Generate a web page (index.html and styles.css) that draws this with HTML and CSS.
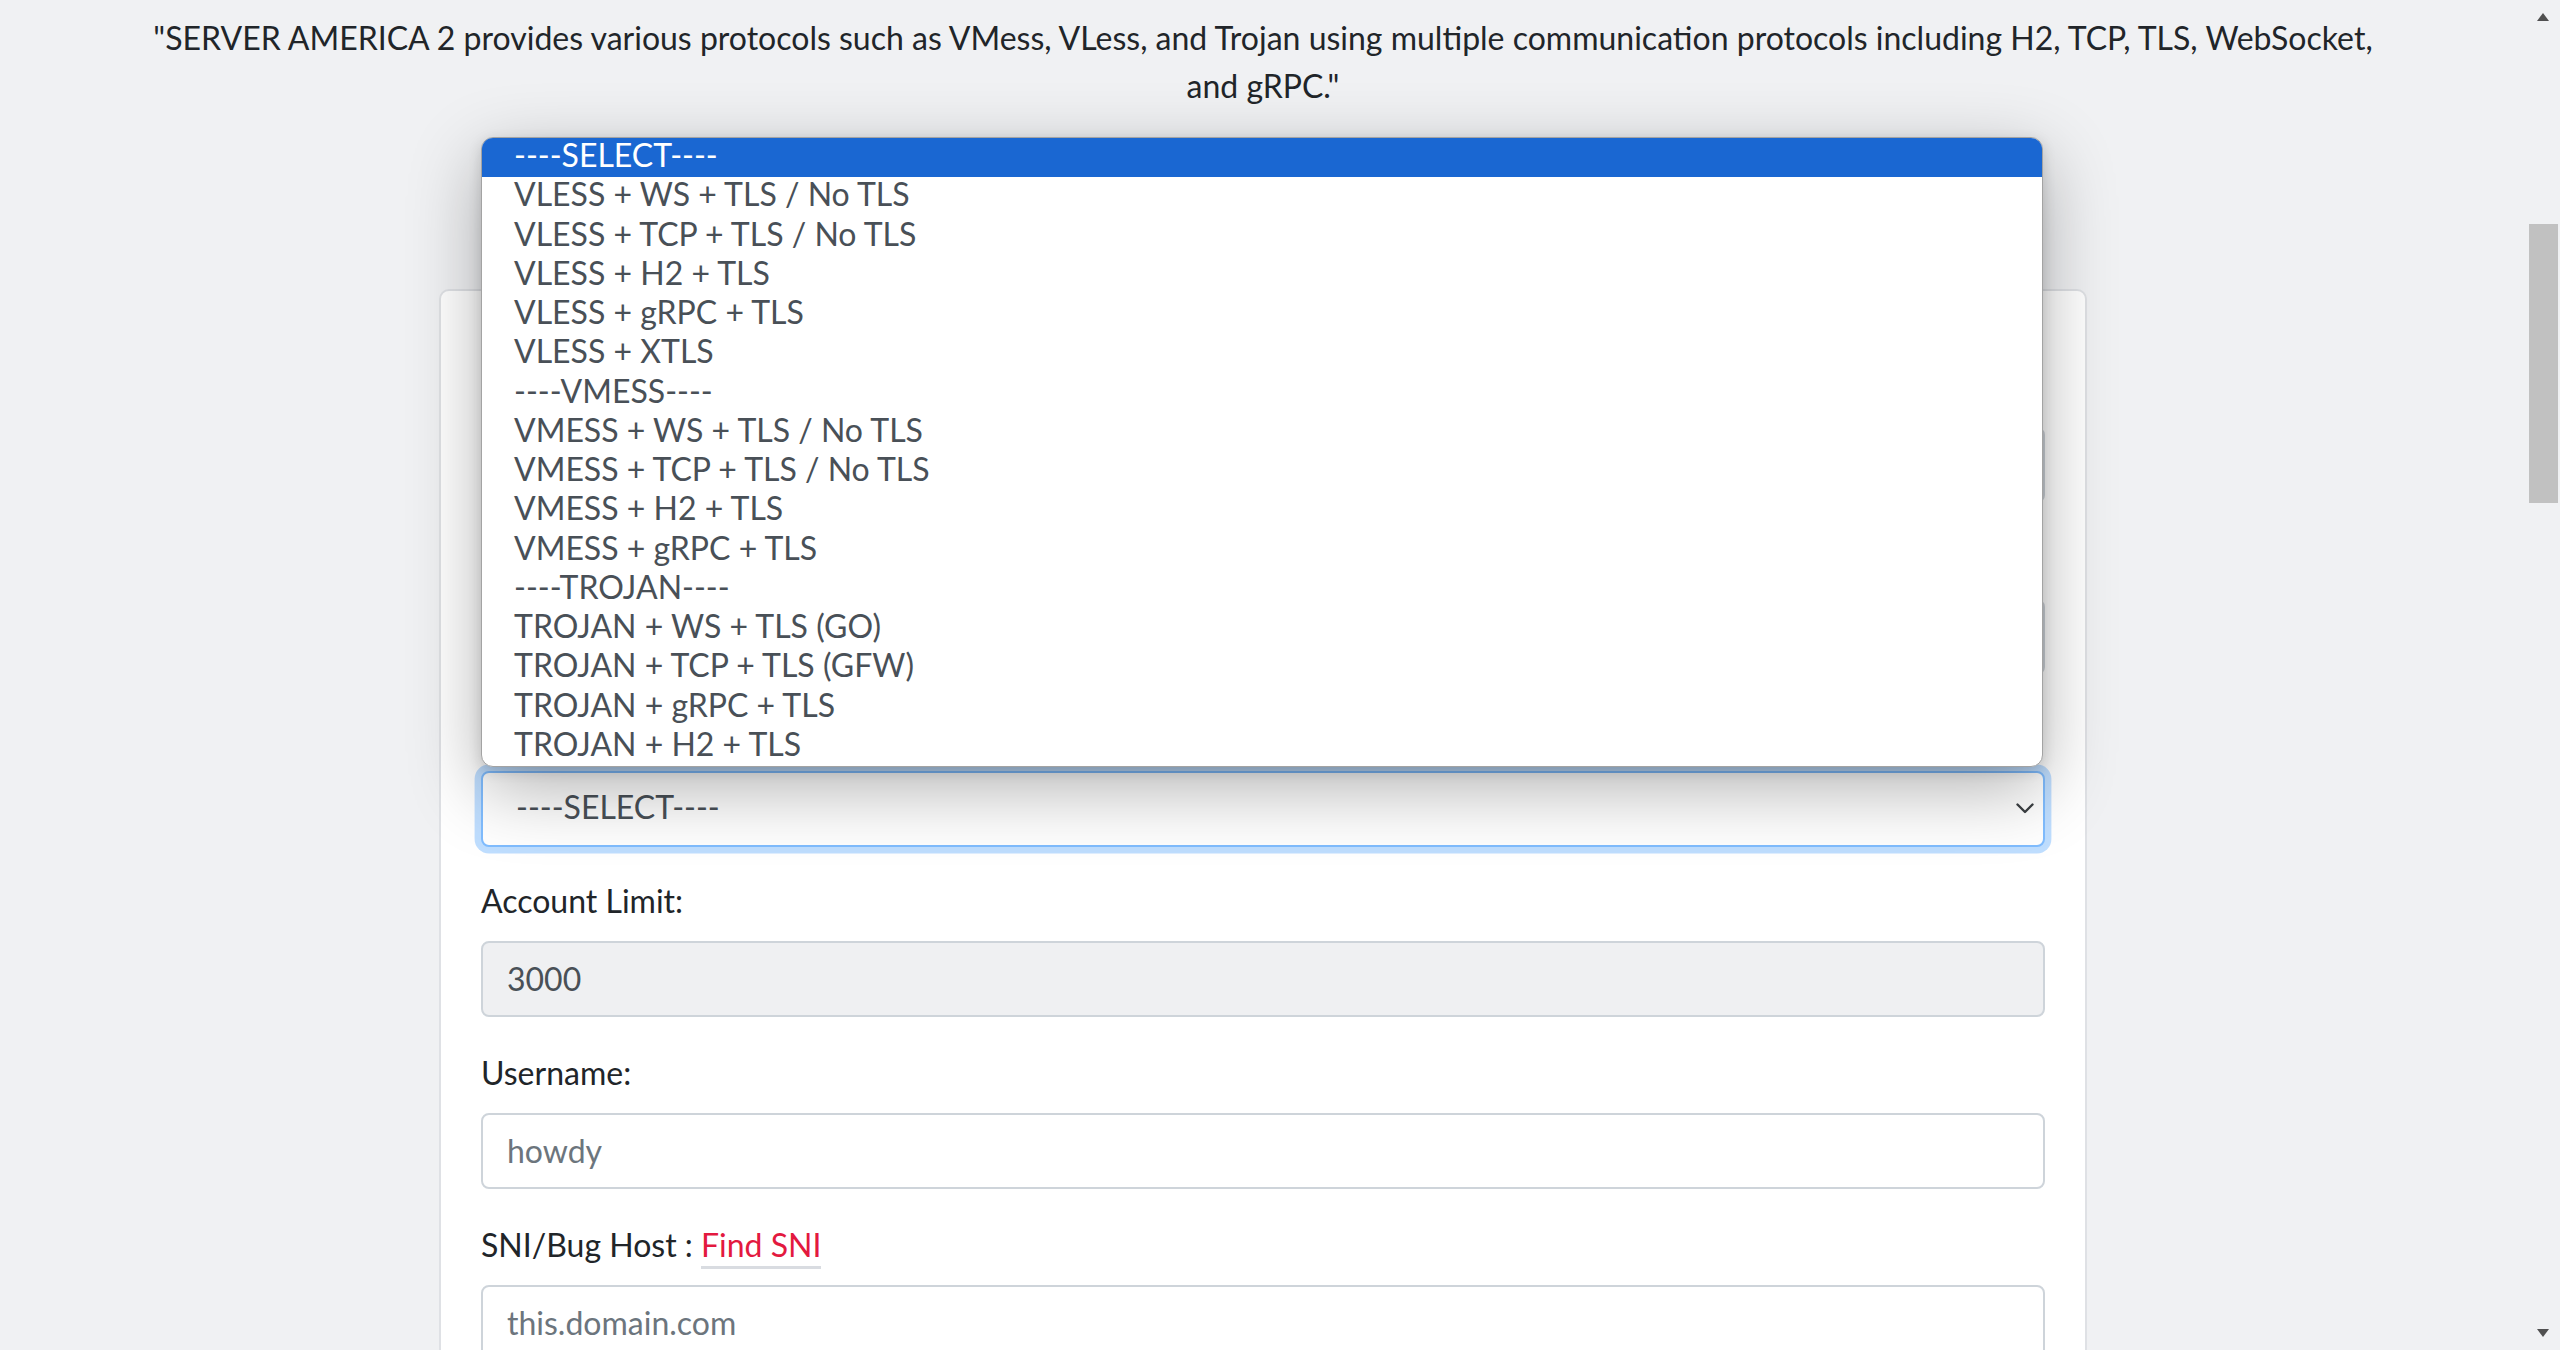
FILE: index.html
```html
<!DOCTYPE html>
<html lang="en">
<head>
<meta charset="utf-8">
<title>SERVER AMERICA 2</title>
<link rel="stylesheet" href="styles.css">
</head>
<body>
<div class="viewport">
  <main class="page">
    <div class="container">
      <p class="intro">"SERVER AMERICA 2 provides various protocols such as VMess, VLess, and Trojan using multiple communication protocols including H2, TCP, TLS, WebSocket, and gRPC."</p>
      <div class="card">
        <div class="card-body">
          <div class="form-group">
            <label class="form-label">Server:</label>
            <input class="form-control" type="text" value="SERVER AMERICA 2" readonly>
          </div>
          <div class="form-group">
            <label class="form-label">Location:</label>
            <input class="form-control" type="text" value="America" readonly>
          </div>
          <div class="form-group form-group-select">
            <label class="form-label">Protocol:</label>
            <div class="select-wrap">
              <div class="select is-focused">
                <span class="select-value">----SELECT----</span>
                <svg class="chevron" width="18" height="11" viewBox="0 0 18 11"><polyline points="1.5,1.5 9,9 16.5,1.5" fill="none" stroke="#3c4043" stroke-width="2.4" stroke-linecap="round" stroke-linejoin="round"/></svg>
              </div>
              <ul class="listbox">
                <li class="option is-active">----SELECT----</li>
                <li class="option">VLESS + WS + TLS / No TLS</li>
                <li class="option">VLESS + TCP + TLS / No TLS</li>
                <li class="option">VLESS + H2 + TLS</li>
                <li class="option">VLESS + gRPC + TLS</li>
                <li class="option">VLESS + XTLS</li>
                <li class="option">----VMESS----</li>
                <li class="option">VMESS + WS + TLS / No TLS</li>
                <li class="option">VMESS + TCP + TLS / No TLS</li>
                <li class="option">VMESS + H2 + TLS</li>
                <li class="option">VMESS + gRPC + TLS</li>
                <li class="option">----TROJAN----</li>
                <li class="option">TROJAN + WS + TLS (GO)</li>
                <li class="option">TROJAN + TCP + TLS (GFW)</li>
                <li class="option">TROJAN + gRPC + TLS</li>
                <li class="option">TROJAN + H2 + TLS</li>
              </ul>
            </div>
          </div>
          <div class="form-group">
            <label class="form-label">Account Limit:</label>
            <input class="form-control" type="text" value="3000" readonly>
          </div>
          <div class="form-group">
            <label class="form-label">Username:</label>
            <input class="form-control" type="text" placeholder="howdy">
          </div>
          <div class="form-group">
            <label class="form-label">SNI/Bug Host : <a class="link" href="#">Find SNI</a></label>
            <input class="form-control" type="text" placeholder="this.domain.com">
          </div>
          <div class="form-group">
            <label class="form-label">Password:</label>
            <input class="form-control" type="text" placeholder="password">
          </div>
        </div>
      </div>
    </div>
  </main>
  <div class="scrollbar">
    <div class="sb-button">
      <svg width="14" height="10" viewBox="0 0 14 10"><polygon points="7,1 13,9 1,9" fill="#505050"/></svg>
    </div>
    <div class="sb-track">
      <div class="sb-thumb"></div>
    </div>
    <div class="sb-button">
      <svg width="14" height="10" viewBox="0 0 14 10"><polygon points="1,1 13,1 7,9" fill="#505050"/></svg>
    </div>
  </div>
</div>
</body>
</html>
```

FILE: styles.css
```css
* {
  box-sizing: border-box;
}

html,
body {
  margin: 0;
  height: 1350px;
  overflow: hidden;
}

body {
  font-family: Lato, "Liberation Sans", sans-serif;
  font-size: 32px;
  line-height: 48px;
  color: #212529;
  background: #f0f1f3;
}

.viewport {
  display: flex;
  height: 1350px;
}

.page {
  flex: 1;
  min-width: 0;
  overflow: hidden;
  padding-top: 14px;
}

.container {
  width: 2220px;
  margin: 0 auto;
}

.intro {
  margin: 0 0 179px;
  text-align: center;
}

.card {
  width: 1648px;
  margin: 0 auto;
  background: #fff;
  border: 2px solid #dfe1e5;
  border-radius: 10px;
}

.card-body {
  padding: 72px 40px 40px;
}

.form-group {
  margin-bottom: 32px;
}

.form-group-select {
  margin-bottom: 30px;
}

.form-label {
  display: block;
  margin-bottom: 16px;
  color: #212529;
}

.form-control {
  display: block;
  width: 100%;
  height: 76px;
  padding: 11px 24px 13px;
  font-family: inherit;
  font-size: 32px;
  line-height: 48px;
  color: #495057;
  background: #fff;
  border: 2px solid #ced4da;
  border-radius: 8px;
  outline: none;
}

.form-control[readonly] {
  background: #eff0f2;
}

.form-control::placeholder {
  color: #6c757d;
  opacity: 1;
}

.link {
  color: #e3193f;
  text-decoration: none;
  border-bottom: 3px solid #d9dce1;
  padding-bottom: 2px;
}

.select-wrap {
  position: relative;
}

.select {
  display: flex;
  align-items: center;
  justify-content: space-between;
  height: 76px;
  padding: 0 9px 0 33px;
  color: #495057;
  background: #fff;
  border: 2px solid #80bdff;
  border-radius: 8px;
}

.select.is-focused {
  box-shadow: 0 0 0 6.4px rgba(0, 123, 255, 0.25);
}

.select-value {
  padding-bottom: 5px;
}

.chevron {
  display: block;
  margin-bottom: 2px;
}

.listbox {
  position: absolute;
  left: 0;
  right: 2px;
  bottom: calc(100% + 4px);
  z-index: 5;
  margin: 0;
  padding: 0;
  list-style: none;
  background: #fff;
  border: 1px solid #a3a3a3;
  border-radius: 12px;
  overflow: hidden;
  box-shadow: 0 22px 72px rgba(0, 0, 0, 0.3), 0 4px 14px rgba(0, 0, 0, 0.14);
}

.option {
  height: 39.25px;
  line-height: 34px;
  padding-left: 32px;
  color: #495057;
  white-space: nowrap;
}

.option.is-active {
  background: #1a67d2;
  color: #fff;
}

.scrollbar {
  flex: 0 0 34px;
  display: flex;
  flex-direction: column;
  background: #f0f1f3;
}

.sb-button {
  height: 34px;
  display: flex;
  align-items: center;
  justify-content: center;
}

.sb-track {
  flex: 1;
  padding: 190px 2px 0 3px;
}

.sb-thumb {
  height: 279px;
  background: #c1c1c1;
}
```
